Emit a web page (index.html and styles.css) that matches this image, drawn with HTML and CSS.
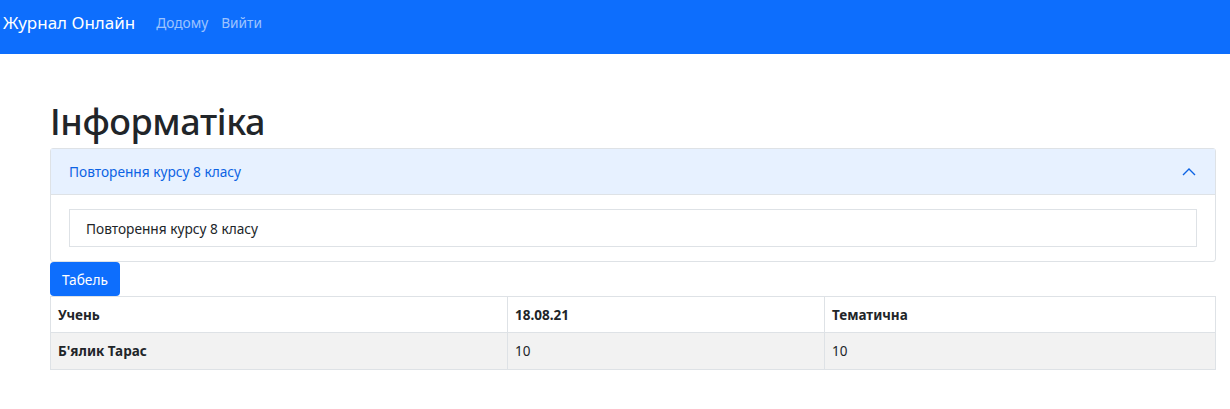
FILE: index.html
```html
<!DOCTYPE html>
<html lang="uk">
<head>
<meta charset="utf-8">
<title>Журнал Онлайн</title>
<link rel="stylesheet" href="styles.css">
</head>
<body>
<nav class="navbar">
  <a class="brand" href="#">Журнал Онлайн</a>
  <a class="nav-link" href="#">Додому</a>
  <a class="nav-link" href="#">Вийти</a>
</nav>
<main class="container">
  <h1 class="title">Інформатіка</h1>
  <div class="accordion">
    <div class="acc-header">
      <span>Повторення курсу 8 класу</span>
      <svg class="chev" width="16" height="16" viewBox="0 0 16 16"><path d="M2 11 L8 5 L14 11" fill="none" stroke="#0c63e4" stroke-width="1.4"/></svg>
    </div>
    <div class="acc-body">
      <div class="acc-box">Повторення курсу 8 класу</div>
    </div>
  </div>
  <button class="btn">Табель</button>
  <table class="table">
    <colgroup><col class="c1"><col class="c2"><col class="c3"></colgroup>
    <thead>
      <tr><th>Учень</th><th>18.08.21</th><th>Тематична</th></tr>
    </thead>
    <tbody>
      <tr class="striped"><th>Б'ялик Тарас</th><td>10</td><td>10</td></tr>
    </tbody>
  </table>
</main>
</body>
</html>
```
FILE: styles.css
```css
* { box-sizing: border-box; }
body {
  margin: 0;
  font-family: "Noto Sans", "Open Sans", sans-serif;
  font-size: 14px;
  color: #212529;
  background: #fff;
}
.navbar {
  height: 54px;
  background: #0d6efd;
  display: flex;
  align-items: center;
  padding: 0 0 0 3px;
}
.brand {
  color: #fff;
  font-size: 17px;
  text-decoration: none;
  margin-right: 21px;
  margin-top: -9px;
}
.nav-link {
  color: rgba(255,255,255,.6);
  text-decoration: none;
  font-size: 13.7px;
  margin-right: 13px;
  margin-top: -9px;
}
.container {
  margin: 0 14px 0 50px;
}
.title {
  font-size: 36px;
  letter-spacing: -0.4px;
  font-weight: 500;
  margin: 46px 0 5px;
  line-height: 1.2;
}
.accordion {
  border: 1px solid #dee2e6;
  border-radius: 3px;
}
.acc-header {
  height: 46px;
  background: #e7f1ff;
  color: #0c63e4;
  font-size: 13.7px;
  display: flex;
  align-items: center;
  justify-content: space-between;
  padding: 0 18px;
  border-bottom: 1px solid #dee2e6;
}
.acc-body {
  padding: 14px 18px;
}
.acc-box {
  border: 1px solid #dee2e6;
  height: 38px;
  display: flex;
  align-items: center;
  padding: 0 16px;
  font-size: 13.7px;
}
.btn {
  display: block;
  background: #0d6efd;
  color: #fff;
  border: 0;
  border-radius: 4px;
  font: inherit;
  font-size: 13.7px;
  height: 34px;
  padding: 0 12px;
  margin: 0;
}
.table {
  width: 100%;
  border-collapse: collapse;
  border: 1px solid #dee2e6;
  table-layout: fixed;
}
.c1 { width: 457px; }
.c2 { width: 317px; }
.table th, .table td {
  border: 1px solid #dee2e6;
  height: 36px;
  padding: 0 7px;
  text-align: left;
  font-size: 13.5px;
}
.table tbody th, .table tbody td { height: 37px; }
.table th { font-weight: 700; }
.table td { font-weight: 400; }
.striped { background: #f2f2f2; }
```
